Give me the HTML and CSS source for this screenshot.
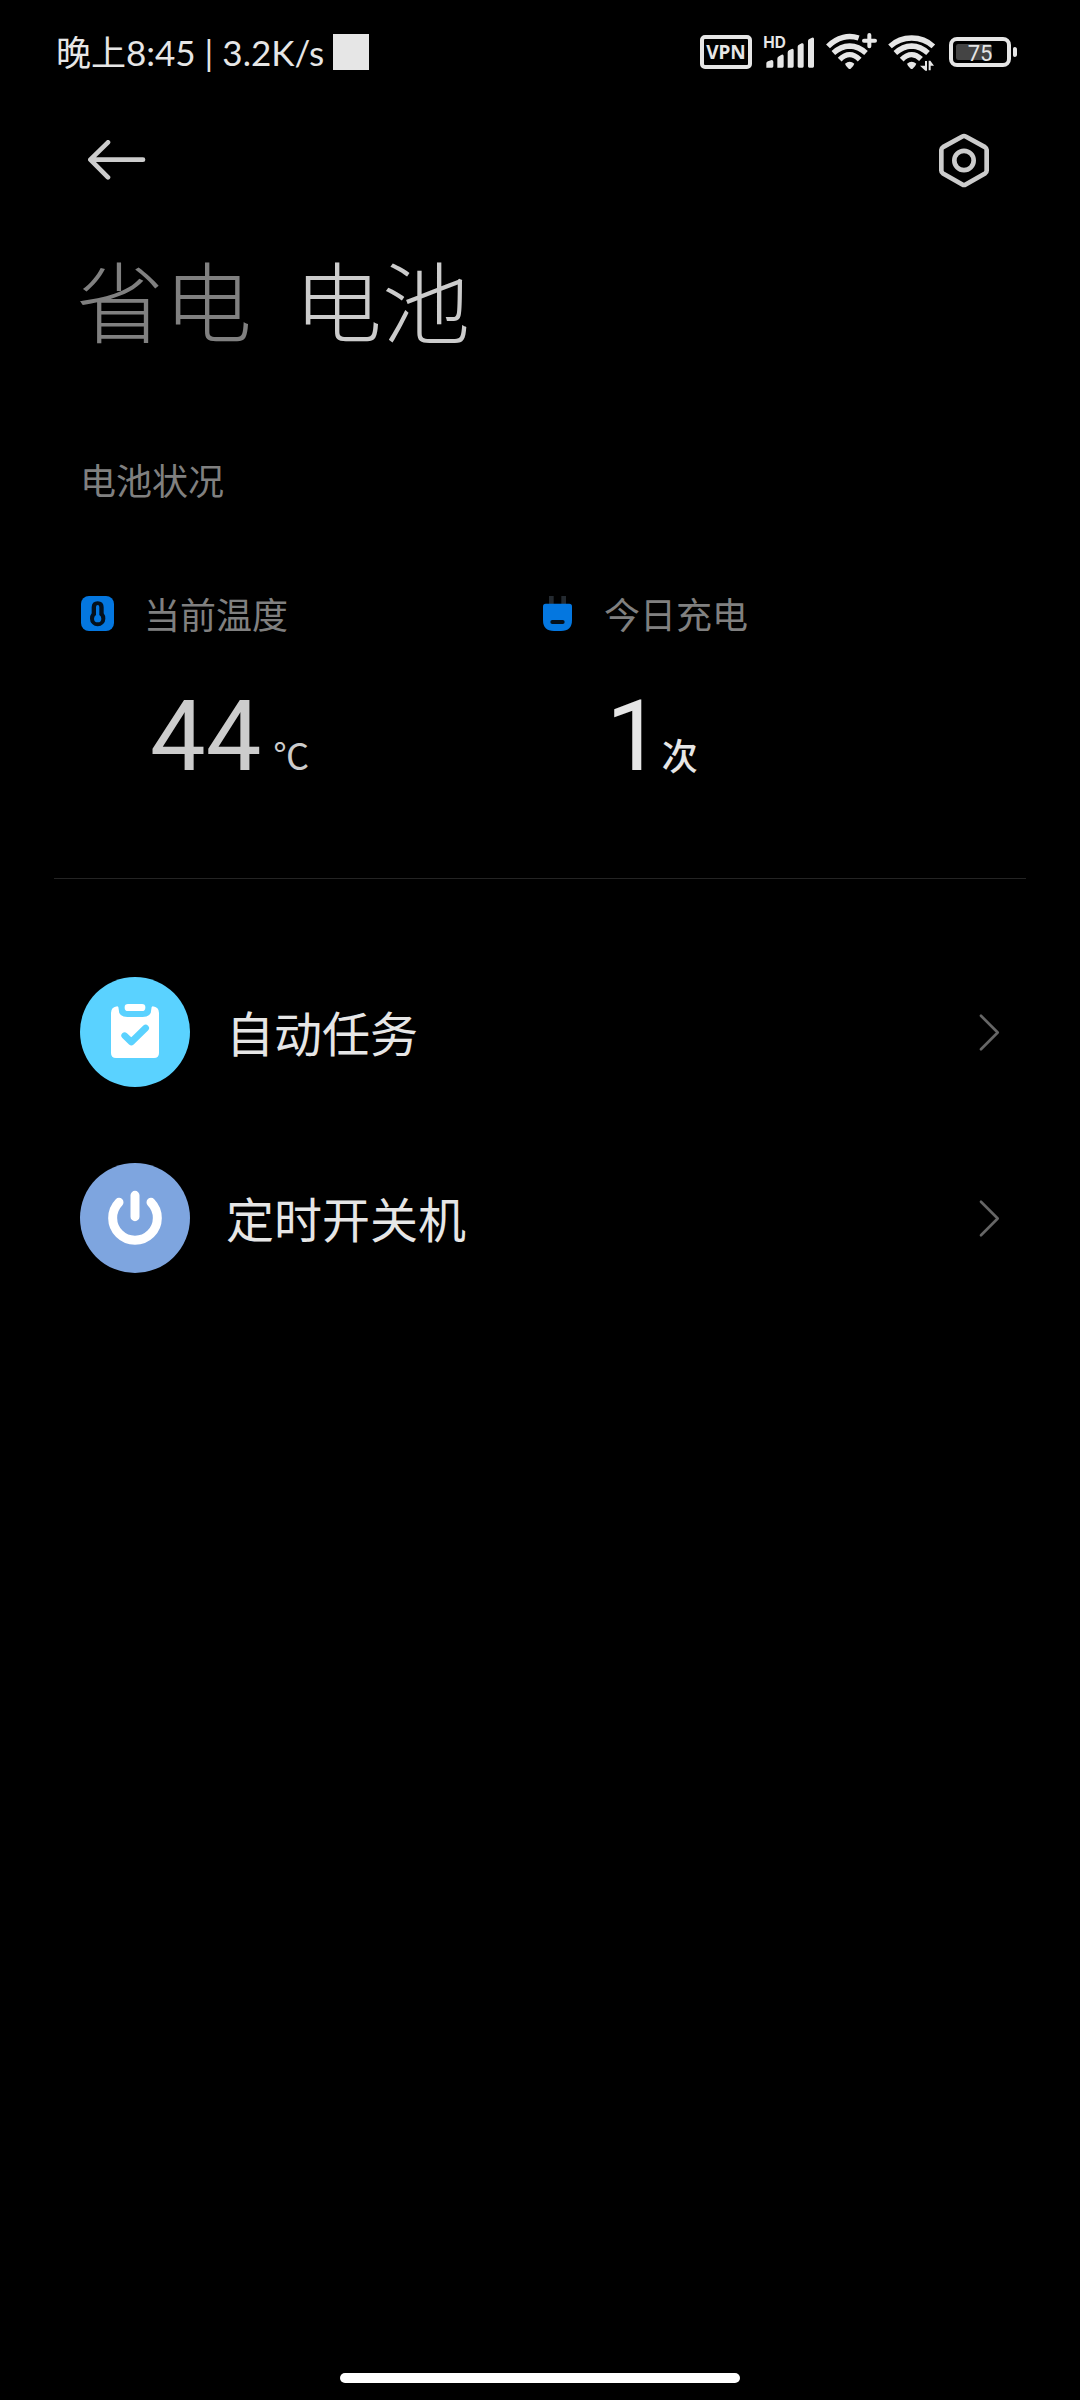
FILE: index.html
```html
<!DOCTYPE html>
<html lang="zh-CN">
<head>
  <meta charset="utf-8">
  <meta name="viewport" content="width=device-width, initial-scale=1">
  <title>电池</title>
  <link rel="stylesheet" href="styles.css">
</head>
<body>
  <div class="status-bar">
    <div class="status-left">
      <span>晚上8:45 | 3.2K/s</span>
      <span class="notification"></span>
    </div>
    <div class="status-right">
      <span class="vpn">VPN</span>
      <svg class="signal" viewBox="222 39 156 114" aria-label="HD">
        <text x="223" y="84" class="hd">HD</text>
        <path d="M232 143V130q0-5 5-6l11-4q5 0 5 5v14q0 4-4 4zM265 143V116q0-5 5-7l8-5q6-2 6 5v30q0 4-4 4h-11zM296 143V98q0-5 4-7l8-4q6-2 6 4v48q0 4-4 4h-10zM326 143V80q0-4 4-6l8-4q6-2 6 4v65q0 4-4 4h-10q-4 0-4-4zM357 139V63q0-4 4-6l8-4q6-2 6 4v82q0 4-4 4h-10q-4 0-4-4z"/>
      </svg>
      <svg class="wifi" viewBox="411 39 153 114" aria-label="Wi-Fi">
        <g class="arcs">
          <path d="M417 79Q436 59 463 52Q485 46 509 54"/>
          <path d="M433 99Q455 79 482 78Q509 79 531 99"/>
          <path d="M452 119Q467 104 482 104Q497 104 512 119"/>
        </g>
        <path d="M468 131Q482 119 496 131Q494 138 485 146Q482 148 479 146Q470 138 468 131z"/>
        <path d="M541 45V79M525 62H558" class="plus"/>
      </svg>
      <svg class="wifi-data" viewBox="591 39 144 114" aria-label="Wi-Fi">
        <g class="arcs">
          <path d="M597 79Q624 54 662 54Q700 54 727 79"/>
          <path d="M613 99Q635 79 662 78Q689 79 711 99"/>
          <path d="M632 119Q647 104 662 104Q677 104 690 117"/>
        </g>
        <path d="M648 131Q662 119 676 131Q674 138 665 146Q662 148 659 146Q650 138 648 131z"/>
        <path d="M702 123h6v29h-5l-16-15h15zM713 151h6v-14h10l-11-15h-5z"/>
      </svg>
      <svg class="battery" viewBox="777 39 204 114" aria-label="75%">
        <rect x="783" y="57" width="174" height="78" rx="18" class="shell"/>
        <rect x="798" y="72" width="107" height="48" rx="7" class="charge"/>
        <path d="M969 86q0-5 5-5 7 0 7 8v14q0 8-7 8-5 0-5-5z"/>
        <text x="870" y="122" class="level">75</text>
      </svg>
    </div>
  </div>

  <header class="toolbar">
    <button type="button" aria-label="返回">
      <svg class="back" viewBox="83 62 174 120"><path d="M143 69L90 121L143 174M92 121H248"/></svg>
    </button>
    <button type="button" aria-label="设置">
      <svg class="gear" viewBox="117 38 150 164">
        <path d="M187 48Q192 45 197 48L255 80Q260 83 260 88V150Q260 156 255 159L197 192Q192 195 187 192L129 159Q124 156 124 150V88Q124 83 129 80z"/>
        <circle cx="192" cy="120" r="29"/>
      </svg>
    </button>
  </header>

  <nav class="tabs">
    <button type="button" class="tab">省电</button>
    <button type="button" class="tab active">电池</button>
  </nav>

  <main>
    <section class="condition">
      <h2>电池状况</h2>
      <div class="stats">
        <div class="stat">
          <svg class="stat-icon" viewBox="60 465 108 111">
            <rect x="63" y="468" width="99" height="105" rx="24" fill="#0477e0"/>
            <path d="M113 484q18 0 18 18v18q5 6 5 16a23 23 0 0 1-46 0q0-10 5-16v-18q0-18 18-18z" fill="#04101c"/>
            <path d="M113 495q5 0 5 6v24q6 4 6 11a11 11 0 0 1-22 0q0-7 6-11v-24q0-6 5-6z" fill="#0477e0"/>
          </svg>
          <div class="stat-body">
            <h3>当前温度</h3>
            <p class="value">44<span class="unit">℃</span></p>
          </div>
        </div>
        <div class="stat">
          <svg class="stat-icon" viewBox="60 75 108 111">
            <path d="M87 78h14v24H87zM124 78h14v24h-14z" fill="#242a30"/>
            <path d="M77 101h71q8 0 8 8v41q0 33-33 33h-21q-33 0-33-33v-41q0-8 8-8z" fill="#0477e0"/>
            <rect x="91" y="150" width="43" height="12" rx="6" fill="#04101c"/>
          </svg>
          <div class="stat-body">
            <h3>今日充电</h3>
            <p class="value bright">1<span class="unit count">次</span></p>
          </div>
        </div>
      </div>
    </section>

    <ul class="links">
      <li>
        <a href="#tasks">
          <svg class="badge" viewBox="60 81 330 330">
            <circle cx="225" cy="246" r="165" fill="#5ad2ff"/>
            <path d="M172 169q4 0 4 8 0 24 26 24h46q26 0 26-24 0-8 4-8 19 2 19 20v120q0 15-15 15H168q-15 0-15-15V189q0-18 19-20z" fill="#fff"/>
            <rect x="194" y="162" width="62" height="21" rx="10" fill="#fff"/>
            <path d="M194 257l20 19 43-42" class="check"/>
          </svg>
          <span class="label">自动任务</span>
          <svg class="chevron" viewBox="118 96 64 116"><path d="M124 103L175 154L124 205"/></svg>
        </a>
      </li>
      <li>
        <a href="#power">
          <svg class="badge" viewBox="60 639 330 330">
            <circle cx="225" cy="804" r="165" fill="#7ea5df"/>
            <path d="M177 757A67 67 0 1 0 273 757M225 736V800" class="power"/>
          </svg>
          <span class="label">定时开关机</span>
          <svg class="chevron" viewBox="118 96 64 116"><path d="M124 103L175 154L124 205"/></svg>
        </a>
      </li>
    </ul>
  </main>

  <div class="home-bar"></div>
</body>
</html>
```
FILE: styles.css
```css
* {
  box-sizing: border-box;
  margin: 0;
  padding: 0;
}

body {
  display: flex;
  flex-direction: column;
  min-height: 100vh;
  background: #000;
  color: #e6e6e6;
  font-family: "Noto Sans", "Noto Sans CJK SC", sans-serif;
}

svg {
  display: block;
  flex: none;
}

button {
  border: 0;
  background: none;
  font: inherit;
  color: inherit;
}

.status-bar {
  display: flex;
  justify-content: space-between;
  align-items: center;
  height: 104px;
  padding: 0 63px 0 56px;
}

.status-left,
.status-right {
  display: flex;
  align-items: center;
}

.status-left {
  gap: 9px;
  font-family: Lato, "Noto Sans CJK SC", sans-serif;
  font-size: 35px;
  line-height: 40px;
}

.notification {
  width: 36px;
  height: 36px;
  background: #e6e6e6;
}

.status-right {
  gap: 11px;
}

.status-right svg {
  height: 38px;
  fill: #e6e6e6;
}

.vpn {
  width: 52px;
  height: 34px;
  border: 4px solid #e6e6e6;
  border-radius: 5px;
  font: 700 19px/26px "Noto Sans", sans-serif;
  text-align: center;
}

.signal { width: 52px; }
.wifi { width: 51px; }
.wifi-data { width: 48px; }
.battery { width: 68px; margin-left: 2px; }

.hd {
  font: 700 46px Inter, sans-serif;
}

.level {
  font: 400 66px Roboto, sans-serif;
  text-anchor: middle;
}

.arcs path {
  fill: none;
  stroke: #e6e6e6;
  stroke-width: 16;
}

.plus {
  stroke: #e6e6e6;
  stroke-width: 12;
  stroke-linecap: round;
}

.shell {
  fill: none;
  stroke: #e6e6e6;
  stroke-width: 12;
}

.charge {
  fill: #444;
}

.toolbar {
  display: flex;
  justify-content: space-between;
  align-items: center;
  height: 112px;
  padding: 0 91px 0 88px;
}

.toolbar path,
.toolbar circle {
  fill: none;
  stroke: #ccc;
  stroke-width: 14;
  stroke-linecap: round;
  stroke-linejoin: round;
}

.back { width: 58px; height: 40px; }
.gear { width: 50px; height: 55px; }

.tabs {
  display: flex;
  gap: 42px;
  padding: 18px 76px 24px;
}

.tab {
  font-family: "Noto Sans CJK SC", sans-serif;
  font-size: 88px;
  font-weight: 300;
  line-height: 128px;
  color: #808080;
}

.tab.active {
  color: #ccc;
}

.condition {
  margin: 0 54px;
  padding: 70px 26px 60px;
  border-bottom: 1px solid #242424;
}

h2,
h3 {
  font-size: 36px;
  font-weight: 400;
  line-height: 52px;
  color: #808080;
}

.stats {
  display: grid;
  grid-template-columns: 1fr 1fr;
  margin-top: 82px;
}

.stat {
  display: flex;
  gap: 28px;
}

.stat-icon {
  width: 36px;
  height: 37px;
  margin-top: 5px;
}

.value {
  margin-top: 30px;
  padding-left: 6px;
  font-family: Roboto, "Noto Sans CJK SC", sans-serif;
  font-size: 99px;
  line-height: 128px;
  color: #ccc;
}

.value.bright {
  padding-left: 2px;
  color: #e6e6e6;
}

.unit {
  margin-left: 12px;
  font-family: "Noto Sans CJK SC", sans-serif;
  font-size: 36px;
}

.unit.count {
  margin-left: 0;
  font-weight: 500;
}

.links {
  padding: 60px 80px;
  list-style: none;
}

.links a {
  display: flex;
  align-items: center;
  height: 186px;
  color: inherit;
  text-decoration: none;
}

.badge {
  width: 110px;
  height: 110px;
}

.label {
  flex: 1;
  margin-left: 36px;
  padding-top: 4px;
  font-size: 48px;
  line-height: 72px;
}

.check {
  fill: none;
  stroke: #5ad2ff;
  stroke-width: 20;
  stroke-linecap: round;
  stroke-linejoin: round;
}

.power {
  fill: none;
  stroke: #fff;
  stroke-width: 27;
  stroke-linecap: round;
}

.chevron {
  width: 21px;
  height: 39px;
}

.chevron path {
  fill: none;
  stroke: #666;
  stroke-width: 8;
  stroke-linecap: round;
  stroke-linejoin: round;
}

.home-bar {
  width: 37%;
  height: 10px;
  margin: auto auto 17px;
  border-radius: 5px;
  background: #fff;
}
```
